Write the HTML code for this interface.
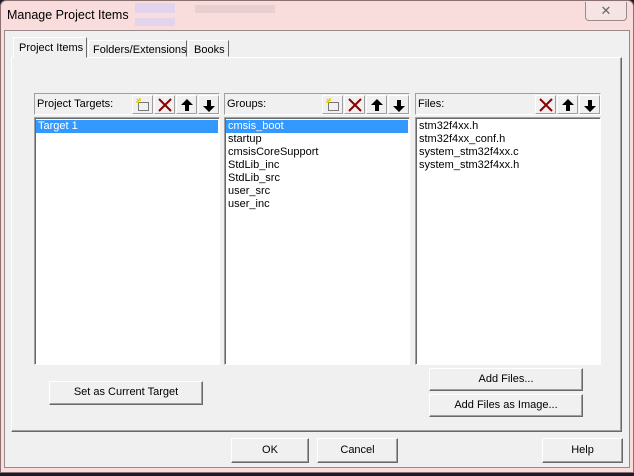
<!DOCTYPE html>
<html><head><meta charset="utf-8"><style>
*{margin:0;padding:0;box-sizing:border-box}
body{width:634px;height:476px;overflow:hidden;background:#1a1a2a;font-family:"Liberation Sans",sans-serif;font-size:11px;color:#000;position:relative}
.a{position:absolute;white-space:nowrap}
.frame{left:0;top:0;width:634px;height:473px;background:#f9dcdc;border:1px solid #8a7070;border-radius:6px 6px 0 0}
.client{left:4px;top:30px;width:626px;height:438px;background:#f0f0f0;border:1px solid #9a8a8a}
.btn{position:absolute;white-space:nowrap;background:#f0f0f0;border:1px solid;border-color:#fff #696969 #696969 #fff;box-shadow:inset -1px -1px 0 #a0a0a0;text-align:center;font-size:11px}
.hdr{position:absolute;height:22px;border:1px solid;border-color:#a0a0a0 #fff #fff #a0a0a0;background:#f0f0f0;font-size:11px;padding:4px 0 0 2px}
.tb{position:absolute;top:1px;width:21px;height:19px;border:1px solid;border-color:#fff #a0a0a0 #a0a0a0 #fff}
.list{position:absolute;background:#fff;border:1px solid;border-color:#a0a0a0 #fff #fff #a0a0a0;box-shadow:inset 1px 1px 0 #696969;padding:2px 1px;font-size:11px;line-height:13px}
.sel{background:#3399ff;color:#fff}
.list div{padding-left:2px}
</style></head><body>
<div class="a frame"></div>
<div class="a" style="left:7px;top:8px;font-size:12.5px">Manage Project Items</div>
<div class="a" style="left:135px;top:3px;width:40px;height:10px;background:#d8d0f4;opacity:.7"></div>
<div class="a" style="left:135px;top:18px;width:40px;height:8px;background:#d8d0f4;opacity:.7"></div>
<div class="a" style="left:195px;top:5px;width:80px;height:8px;background:#e8d0d0"></div>
<div class="a" style="left:585px;top:2px;width:42px;height:19px;border:1px solid #9a8a8a;border-top:none;border-radius:0 0 4px 4px;background:#f6e4e4;text-align:center;font-size:13px;color:#666;line-height:17px">✕</div>
<div class="a client"></div>
<div class="a" style="left:11px;top:57px;width:611px;height:375px;border:1px solid;border-color:#fff #696969 #696969 #fff;box-shadow:inset -1px -1px 0 #a0a0a0"></div>
<div class="a" style="left:13px;top:37px;width:74px;height:21px;background:#f0f0f0;border:1px solid;border-color:#fff #696969 transparent #fff;font-size:11px;padding:4px 0 0 5px">Project Items</div>
<div class="a" style="left:88px;top:40px;width:99px;height:17px;border:1px solid;border-color:#fff #696969 transparent #fff;font-size:11px;padding:3px 0 0 4px">Folders/Extensions</div>
<div class="a" style="left:188px;top:40px;width:41px;height:17px;border:1px solid;border-color:#fff #696969 transparent #fff;font-size:11px;padding:3px 0 0 5px">Books</div>

<svg width="0" height="0" style="position:absolute"><defs>
<g id="nw"><rect x="5.5" y="6.5" width="10" height="8" fill="none" stroke="#000" stroke-dasharray="1 1"/><path d="M4 3l2 2M7 2v3M3 6h3" stroke="#e0d000" stroke-width="1.5"/></g>
<g id="dl"><path d="M4 3l12 12M16 3L4 15" stroke="#8b0000" stroke-width="2"/></g>
<g id="up"><path d="M10 3l-6 6h4v6h4v-6h4z" fill="#000"/></g>
<g id="dn"><path d="M10 16l-6-6h4v-6h4v6h4z" fill="#000"/></g>
</defs></svg>

<div class="hdr" style="left:34px;top:93px;width:186px">Project Targets:
 <div class="tb" style="left:97px"><svg width="20" height="18"><use href="#nw"/></svg></div>
 <div class="tb" style="left:119px"><svg width="20" height="18"><use href="#dl"/></svg></div>
 <div class="tb" style="left:141px"><svg width="20" height="18"><use href="#up"/></svg></div>
 <div class="tb" style="left:163px"><svg width="20" height="18"><use href="#dn"/></svg></div>
</div>
<div class="hdr" style="left:224px;top:93px;width:186px">Groups:
 <div class="tb" style="left:97px"><svg width="20" height="18"><use href="#nw"/></svg></div>
 <div class="tb" style="left:119px"><svg width="20" height="18"><use href="#dl"/></svg></div>
 <div class="tb" style="left:141px"><svg width="20" height="18"><use href="#up"/></svg></div>
 <div class="tb" style="left:163px"><svg width="20" height="18"><use href="#dn"/></svg></div>
</div>
<div class="hdr" style="left:415px;top:93px;width:186px">Files:
 <div class="tb" style="left:119px"><svg width="20" height="18"><use href="#dl"/></svg></div>
 <div class="tb" style="left:141px"><svg width="20" height="18"><use href="#up"/></svg></div>
 <div class="tb" style="left:163px"><svg width="20" height="18"><use href="#dn"/></svg></div>
</div>

<div class="list" style="left:34px;top:117px;width:186px;height:248px"><div class="sel">Target 1</div></div>
<div class="list" style="left:224px;top:117px;width:186px;height:248px"><div class="sel">cmsis_boot</div><div>startup</div><div>cmsisCoreSupport</div><div>StdLib_inc</div><div>StdLib_src</div><div>user_src</div><div>user_inc</div></div>
<div class="list" style="left:415px;top:117px;width:186px;height:248px"><div>stm32f4xx.h</div><div>stm32f4xx_conf.h</div><div>system_stm32f4xx.c</div><div>system_stm32f4xx.h</div></div>

<div class="btn" style="left:49px;top:381px;width:154px;height:24px;line-height:21px">Set as Current Target</div>
<div class="btn" style="left:429px;top:368px;width:154px;height:23px;line-height:20px">Add Files...</div>
<div class="btn" style="left:429px;top:394px;width:154px;height:23px;line-height:20px">Add Files as Image...</div>
<div class="btn" style="left:231px;top:438px;width:78px;height:25px;line-height:22px">OK</div>
<div class="btn" style="left:317px;top:438px;width:81px;height:25px;line-height:22px">Cancel</div>
<div class="btn" style="left:542px;top:438px;width:81px;height:25px;line-height:22px">Help</div>
</body></html>
